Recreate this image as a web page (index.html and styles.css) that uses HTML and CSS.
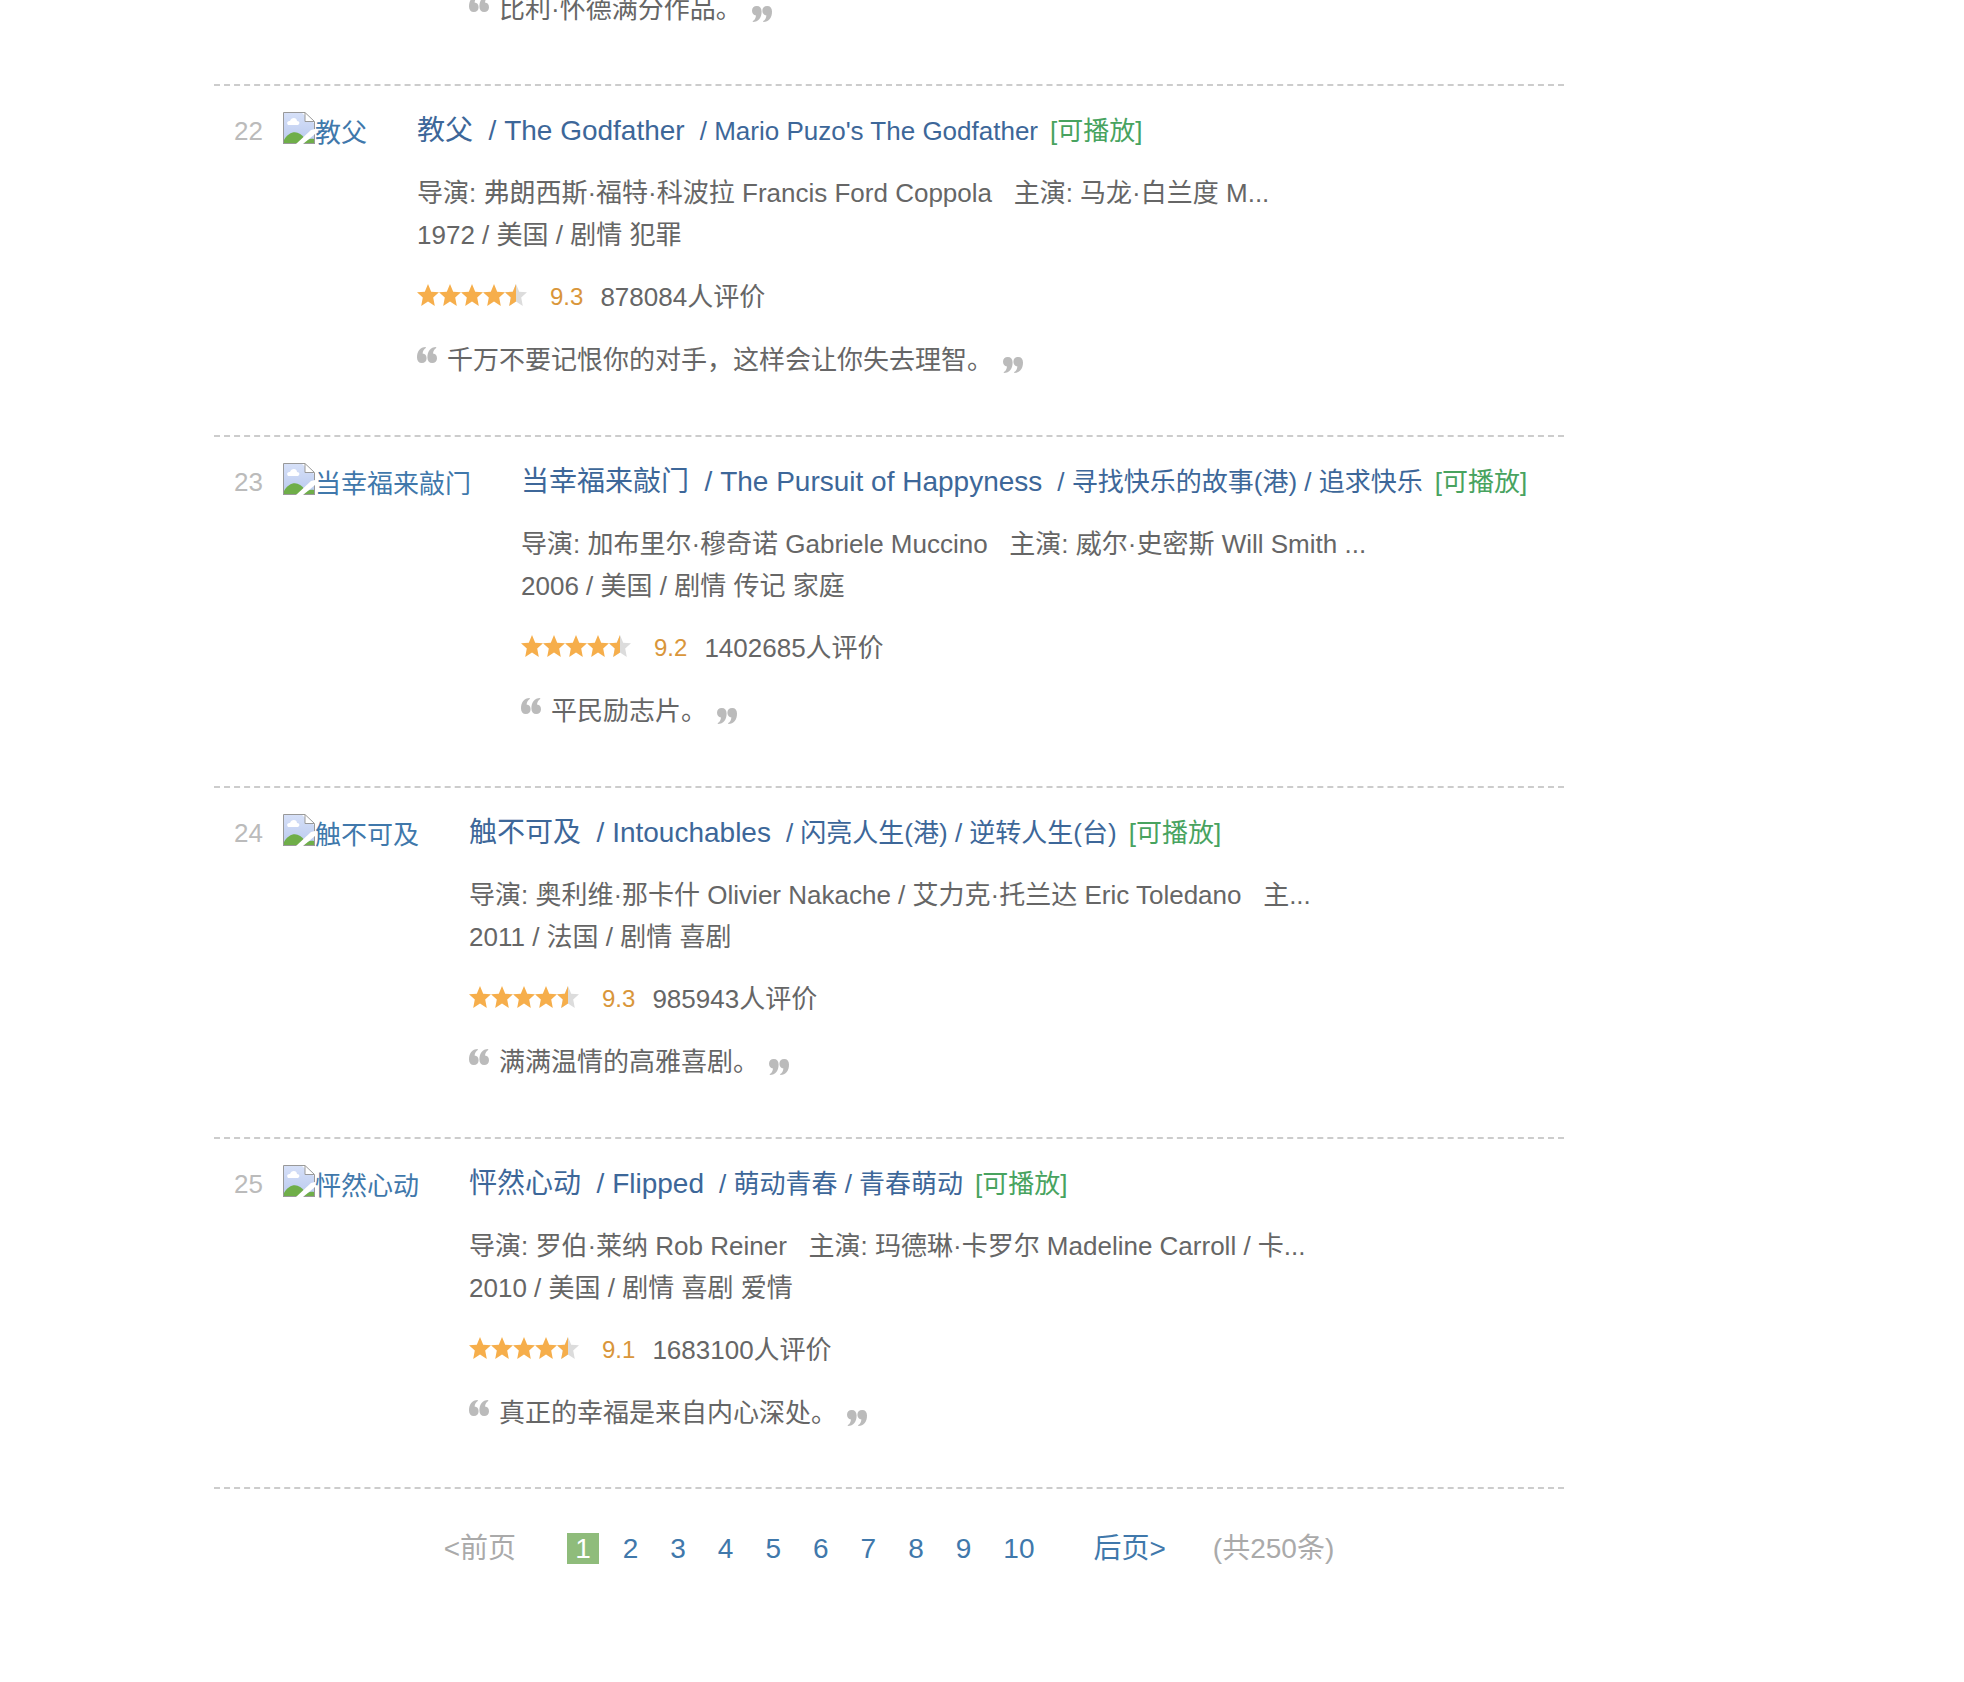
FILE: index.html
```html
<!DOCTYPE html>
<html lang="zh-CN">
<head>
<meta charset="utf-8">
<title>豆瓣电影 Top 250</title>
<link rel="stylesheet" href="styles.css">
</head>
<body>
<svg class="defs" aria-hidden="true">
  <defs>
    <path id="star" d="M11 0L14.200 7.800 22 8.200 16.200 13.500 17.800 22 11 17.600 4.200 22 5.800 13.500 0 8.200 7.800 7.800z"/>
    <clipPath id="left-half"><rect width="11" height="22"/></clipPath>
    <linearGradient id="sky" x1="0" y1="0" x2="0" y2="1">
      <stop offset="0" stop-color="#d6e0f8"/><stop offset="1" stop-color="#b9c9ee"/>
    </linearGradient>
    <symbol id="stars" viewBox="0 0 110 26">
      <g fill="#f6ae4b">
        <use href="#star"/><use href="#star" x="22"/><use href="#star" x="44"/><use href="#star" x="66"/>
      </g>
      <g transform="translate(88)">
        <use href="#star" fill="#dcdcdc"/><use href="#star" fill="#f6ae4b" clip-path="url(#left-half)"/>
      </g>
    </symbol>
    <symbol id="quote-open" viewBox="0 0 20 16">
      <path id="mark" fill="#bbb" d="M8.800 0C3 0 0 4.500 0 10.500 0 14 1.700 16 4.800 16 7.800 16 9.600 14.200 9.600 11.200 9.600 8.500 8 6.800 5.600 6.600 5.800 4 7 2 8.800 1z"/>
      <use href="#mark" x="10.400"/>
    </symbol>
    <symbol id="quote-close" viewBox="0 0 20 16">
      <use href="#quote-open" width="20" height="16" transform="rotate(180 10 8)"/>
    </symbol>
    <symbol id="broken" viewBox="0 0 32 32">
      <path d="M1 1h18l12 10v20H1z" fill="url(#sky)"/>
      <path d="M5 13c-2-3 0-4 2-4 1-4 7-4 7 0 3 0 3 3 1 4z" fill="#fff"/>
      <path d="M1 31v-3c6-10 15-10 21-1l2 4z" fill="#6fae49"/>
      <path d="M20 31c4-4 8-5 11-4v4z" fill="#6fae49"/>
      <path d="M22 0h10v10z" fill="#fff"/>
      <path d="M22 1v8h9z" fill="#fff"/>
      <path d="M.500 32V.500h21.500l9.500 9V32M22 1v8.500h9M0 31.500h32" fill="none" stroke="#999" stroke-width="1"/>
      <path d="M13 32L28 18l4-1v5L20 32z" fill="#fff"/>
    </symbol>
  </defs>
</svg>

<main class="content">
  <ol class="movies">
    <li class="movie">
      <span class="rank rank-cut"></span>
      <div class="info info-cut">
        <p class="quote"><svg class="mark-open"><use href="#quote-open"/></svg><span>比利·怀德满分作品。</span><svg class="mark-close"><use href="#quote-close"/></svg></p>
      </div>
    </li>
    <li class="movie">
      <span class="rank">22</span>
      <a class="poster" href="#m22"><svg class="broken"><use href="#broken"/></svg><span>教父</span></a>
      <div class="info">
        <h2 class="title" id="m22"><a href="#m22">教父 &nbsp;/&nbsp;The Godfather <span class="other">&nbsp;/&nbsp;Mario Puzo's The Godfather</span></a><span class="playable">[可播放]</span></h2>
        <p class="credits">导演: 弗朗西斯·福特·科波拉 Francis Ford Coppola&nbsp;&nbsp;&nbsp;主演: 马龙·白兰度 M...<br>1972&nbsp;/&nbsp;美国&nbsp;/&nbsp;剧情 犯罪</p>
        <p class="rating"><svg class="stars" role="img" aria-label="4.5"><use href="#stars"/></svg><span class="score">9.3</span><span>878084人评价</span></p>
        <p class="quote"><svg class="mark-open"><use href="#quote-open"/></svg><span>千万不要记恨你的对手，这样会让你失去理智。</span><svg class="mark-close"><use href="#quote-close"/></svg></p>
      </div>
    </li>
    <li class="movie">
      <span class="rank">23</span>
      <a class="poster" href="#m23"><svg class="broken"><use href="#broken"/></svg><span>当幸福来敲门</span></a>
      <div class="info">
        <h2 class="title" id="m23"><a href="#m23">当幸福来敲门 &nbsp;/&nbsp;The Pursuit of Happyness <span class="other">&nbsp;/&nbsp;寻找快乐的故事(港) / 追求快乐</span></a><span class="playable">[可播放]</span></h2>
        <p class="credits">导演: 加布里尔·穆奇诺 Gabriele Muccino&nbsp;&nbsp;&nbsp;主演: 威尔·史密斯 Will Smith ...<br>2006&nbsp;/&nbsp;美国&nbsp;/&nbsp;剧情 传记 家庭</p>
        <p class="rating"><svg class="stars" role="img" aria-label="4.5"><use href="#stars"/></svg><span class="score">9.2</span><span>1402685人评价</span></p>
        <p class="quote"><svg class="mark-open"><use href="#quote-open"/></svg><span>平民励志片。</span><svg class="mark-close"><use href="#quote-close"/></svg></p>
      </div>
    </li>
    <li class="movie">
      <span class="rank">24</span>
      <a class="poster" href="#m24"><svg class="broken"><use href="#broken"/></svg><span>触不可及</span></a>
      <div class="info">
        <h2 class="title" id="m24"><a href="#m24">触不可及 &nbsp;/&nbsp;Intouchables <span class="other">&nbsp;/&nbsp;闪亮人生(港) / 逆转人生(台)</span></a><span class="playable">[可播放]</span></h2>
        <p class="credits">导演: 奥利维·那卡什 Olivier Nakache / 艾力克·托兰达 Eric Toledano&nbsp;&nbsp;&nbsp;主...<br>2011&nbsp;/&nbsp;法国&nbsp;/&nbsp;剧情 喜剧</p>
        <p class="rating"><svg class="stars" role="img" aria-label="4.5"><use href="#stars"/></svg><span class="score">9.3</span><span>985943人评价</span></p>
        <p class="quote"><svg class="mark-open"><use href="#quote-open"/></svg><span>满满温情的高雅喜剧。</span><svg class="mark-close"><use href="#quote-close"/></svg></p>
      </div>
    </li>
    <li class="movie">
      <span class="rank">25</span>
      <a class="poster" href="#m25"><svg class="broken"><use href="#broken"/></svg><span>怦然心动</span></a>
      <div class="info">
        <h2 class="title" id="m25"><a href="#m25">怦然心动 &nbsp;/&nbsp;Flipped <span class="other">&nbsp;/&nbsp;萌动青春 / 青春萌动</span></a><span class="playable">[可播放]</span></h2>
        <p class="credits">导演: 罗伯·莱纳 Rob Reiner&nbsp;&nbsp;&nbsp;主演: 玛德琳·卡罗尔 Madeline Carroll / 卡...<br>2010&nbsp;/&nbsp;美国&nbsp;/&nbsp;剧情 喜剧 爱情</p>
        <p class="rating"><svg class="stars" role="img" aria-label="4.5"><use href="#stars"/></svg><span class="score">9.1</span><span>1683100人评价</span></p>
        <p class="quote"><svg class="mark-open"><use href="#quote-open"/></svg><span>真正的幸福是来自内心深处。</span><svg class="mark-close"><use href="#quote-close"/></svg></p>
      </div>
    </li>
  </ol>
  <nav class="pager" aria-label="分页">
    <span class="muted">&lt;前页</span>
    <div class="pages">
      <span class="current" aria-current="page">1</span>
      <a href="#p2">2</a>
      <a href="#p3">3</a>
      <a href="#p4">4</a>
      <a href="#p5">5</a>
      <a href="#p6">6</a>
      <a href="#p7">7</a>
      <a href="#p8">8</a>
      <a href="#p9">9</a>
      <a href="#p10">10</a>
    </div>
    <a href="#p2">后页&gt;</a>
    <span class="muted total">(共250条)</span>
  </nav>
</main>
</body>
</html>
```
FILE: styles.css
```css
* {
  box-sizing: border-box;
}

body {
  margin: 0;
  background: #fff;
  color: #666;
  font: 26px/42px "Liberation Sans", "Noto Sans CJK SC", sans-serif;
}

a {
  color: #4078ab;
  text-decoration: none;
}

p,
h2,
ol {
  margin: 0;
  padding: 0;
}

svg {
  flex: none;
}

.defs {
  position: absolute;
  width: 0;
  height: 0;
}

.content {
  max-width: 1350px;
  margin-left: 214px;
  overflow: hidden;
}

.movies {
  margin-top: -12px;
  list-style: none;
}

.movie {
  display: flex;
  align-items: flex-start;
  padding: 0 0 54px 20px;
  border-bottom: 2px dashed #ccc;
}

.movie:last-child {
  padding-bottom: 53px;
}

.rank {
  flex: none;
  width: 49px;
  padding-top: 25px;
  line-height: 40px;
  color: #bbb;
}

.rank-cut {
  padding-top: 0;
}

.poster {
  display: flex;
  flex: none;
  margin-right: 50px;
  padding-top: 26px;
  line-height: 42px;
}

.broken {
  width: 32px;
  height: 32px;
}

.info {
  padding-top: 25px;
}

/* The entry scrolled past the top keeps the column of a four-character title. */
.info-cut {
  padding: 0 0 0 186px;
}

.title {
  margin-bottom: 21px;
  font-size: 28px;
  line-height: 40px;
  font-weight: normal;
}

.title a {
  color: #3d6799;
}

.other,
.playable {
  font-size: 26px;
}

.playable {
  margin-left: 12px;
  color: #48a35f;
}

.credits {
  margin-bottom: 20px;
}

.rating {
  display: flex;
  margin-bottom: 21px;
}

.stars {
  width: 110px;
  height: 26px;
  margin: 8px 23px 0 0;
}

.score {
  margin-right: 17px;
  font-size: 24px;
  color: #d9963a;
}

.quote {
  display: flex;
  gap: 10px;
}

.mark-open,
.mark-close {
  width: 20px;
  height: 16px;
  margin-top: 8px;
}

.mark-close {
  margin-top: 18px;
}

.pager {
  display: flex;
  justify-content: center;
  gap: 51px;
  padding: 44px 0 100px;
  font-size: 28px;
  line-height: 31px;
}

.pages {
  display: flex;
  gap: 16px;
}

.pages > * {
  padding: 0 8px;
}

.current {
  background: #8fbc7b;
  color: #fff;
}

.muted {
  color: #aaa;
}

.total {
  margin-left: -4px;
}
```
